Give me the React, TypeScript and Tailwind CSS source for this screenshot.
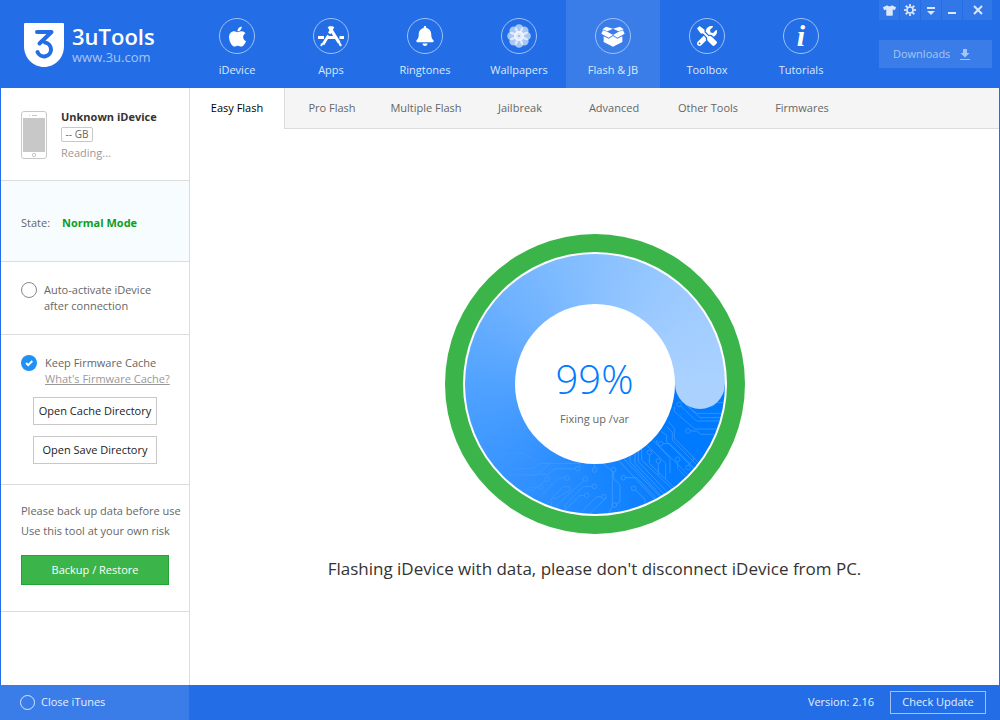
import type { ReactNode } from "react";
import { FaApple, FaBell, FaTools, FaTshirt } from "react-icons/fa";

type NavItem = {
  label: string;
  icon: ReactNode;
  active?: boolean;
};

function AppsIcon() {
  return (
    <svg width="28" height="24" viewBox="0 0 28 24" fill="none" stroke="white">
      <path d="M1 13.500H7M10.500 13.500h8M22.500 13.500H27" strokeWidth="2.800" />
      <path d="M16 2.500 12.300 9.500M11.500 11.500 6 20.500" strokeWidth="2.800" />
      <path d="M5.300 19.500 4 22" strokeWidth="1.800" />
      <path d="M12 2.500 22 18.500" strokeWidth="3.200" />
      <path d="m21.500 17.500 2.500 4.500" strokeWidth="2.200" />
    </svg>
  );
}

function FlowerIcon() {
  const petals = [0, 45, 90, 135, 180, 225, 270, 315];
  return (
    <svg width="24" height="24" viewBox="0 0 24 24" fill="white">
      {petals.map((angle) => (
        <circle
          key={angle}
          cx="12"
          cy="4.500"
          r="4.300"
          opacity="0.6"
          transform={`rotate(${angle} 12 12)`}
        />
      ))}
      <circle cx="12" cy="12" r="5" opacity="0.85" />
      <circle cx="12" cy="12" r="1" fill="#8db5f3" />
    </svg>
  );
}

function BoxIcon() {
  return (
    <svg width="24" height="21" viewBox="0 0 72 63" fill="white">
      <path d="M15 2 36 8 19 16 4 10Z" />
      <path d="M57 2 36 8 53 16 68 10Z" />
      <path d="M19 17 36 27 23 35 1 23 6 13Z" />
      <path d="M53 17 36 27 49 35 71 23 66 13Z" />
      <path d="M8 31 23 38 36 30 49 38 64 31V48L36 62 8 48Z" />
    </svg>
  );
}

function GearIcon() {
  const teeth = [0, 45, 90, 135, 180, 225, 270, 315];
  return (
    <svg width="12" height="12" viewBox="0 0 12 12" fill="none" stroke="currentColor">
      <circle cx="6" cy="6" r="3" strokeWidth="1.600" />
      {teeth.map((angle) => (
        <path key={angle} d="M6 0v2.600" strokeWidth="1.800" transform={`rotate(${angle} 6 6)`} />
      ))}
    </svg>
  );
}

function MenuIcon() {
  return (
    <svg width="10" height="10" viewBox="0 0 10 10" fill="currentColor">
      <path d="M1 2h8v2H1zM1 6h8L5 10z" />
    </svg>
  );
}

function MinimizeIcon() {
  return (
    <svg width="10" height="10" viewBox="0 0 10 10" fill="currentColor">
      <path d="M1 7h8v2H1z" />
    </svg>
  );
}

function CloseIcon() {
  return (
    <svg width="10" height="10" viewBox="0 0 10 10" stroke="currentColor" strokeWidth="2">
      <path d="m1 1 8 8M9 1 1 9" />
    </svg>
  );
}

function DownloadIcon() {
  return (
    <svg width="10" height="11" viewBox="0 0 10 11" fill="currentColor">
      <path d="M3 0h4v4h2.500L5 8.500.5 4H3zM0 10h10v1H0z" />
    </svg>
  );
}

function Logo() {
  return (
    <svg width="40" height="44" viewBox="0 0 40 44" fill="none">
      <path d="M1 0h38a1 1 0 0 1 1 1v22c0 12-9 21-20 21S0 35 0 23V1a1 1 0 0 1 1-1Z" fill="white" />
      <path
        d="M13 9h14.500L15.500 20.500M21 19.500a7 7 0 1 1-7.500 9.500"
        stroke="#236ee6"
        strokeWidth="4"
        strokeLinecap="round"
        strokeLinejoin="round"
      />
    </svg>
  );
}

function PhoneIcon() {
  return (
    <svg width="26" height="48" viewBox="0 0 26 48" fill="none" stroke="#c8c8c8">
      <rect x="0.5" y="0.5" width="25" height="47" rx="2.500" />
      <rect x="2" y="7" width="22" height="34" fill="#c8c8c8" stroke="none" />
      <path d="M8 4.500h1M11 4.500h5" />
      <circle cx="13" cy="44" r="1.700" />
    </svg>
  );
}

const dots = [
  [717, 523], [744, 603], [662, 641], [628, 667], [655, 693], [713, 688], [744, 713],
  [521, 719], [550, 743], [581, 775], [491, 800], [523, 825], [463, 769], [440, 796],
  [436, 747], [464, 720], [413, 716], [381, 744], [322, 748], [302, 772],
];

const traces = [
  "M723 529 770 573H850",
  "M735 522 780 563H850",
  "M745 530 770 550H860",
  "M703 530V545L765 597H840",
  "M751 603H770L782 613H840",
  "M815 530 830 518H860",
  "M669 641H690L790 740",
  "M685 575 703 595V625L800 722",
  "M680 590 697 607V630L795 730",
  "M664 605 680 615V635L785 740",
  "M650 630V640L770 760",
  "M628 674V700L720 790",
  "M655 700V735",
  "M713 695V715L745 750",
  "M744 706 760 690V680",
  "M640 632 690 685V730",
  "M620 645 677 700V745",
  "M595 660V695L690 795",
  "M585 668V700L680 800",
  "M570 675V695L670 805",
  "M550 685 660 800V830",
  "M535 690 650 815",
  "M605 655V690L700 780",
  "M557 743H590L645 800V830",
  "M586 780 615 808V840",
  "M521 726V745L540 765V815L529 822",
  "M490 700 517 725V830L505 850",
  "M497 805 450 850",
  "M485 800H470L420 850",
  "M457 769H430L375 825V850",
  "M433 796H420L370 845",
  "M431 752 345 830",
  "M375 744H355L300 800",
  "M316 753 280 780H235",
  "M296 772H270L240 800",
  "M407 716H345L325 733H240L215 760",
  "M420 710V700H300L280 715H200",
  "M390 770V780L350 805H335V840",
  "M390 770H370L320 820",
  "M285 690 250 670H180",
  "M330 700 290 735H190",
  "M464 713V700",
];

// Decorative circuit board pattern in the lower part of the ring
function Circuit() {
  return (
    <svg
      className="absolute inset-0 h-full w-full"
      viewBox="75 72 780 780"
      fill="none"
      stroke="white"
      strokeWidth="3"
    >
      <defs>
        <linearGradient id="fade" x1="180" y1="0" x2="560" y2="0" gradientUnits="userSpaceOnUse">
          <stop offset="0" stopColor="white" stopOpacity="0.1" />
          <stop offset="1" stopColor="white" />
        </linearGradient>
        <mask id="circuit-fade" maskUnits="userSpaceOnUse" x="75" y="72" width="780" height="780">
          <rect x="75" y="72" width="780" height="780" fill="url(#fade)" stroke="none" />
        </mask>
      </defs>
      <g mask="url(#circuit-fade)" opacity="0.18">
        {traces.map((d) => (
          <path key={d} d={d} />
        ))}
        {dots.map(([x, y]) => (
          <circle key={`${x}-${y}`} cx={x} cy={y} r="7" />
        ))}
      </g>
      <path d="M705 462h150a75 75 0 0 1-150 0Z" fill="#abd2ff" stroke="none" />
    </svg>
  );
}

const navItems: NavItem[] = [
  { label: "iDevice", icon: <FaApple size={23} /> },
  { label: "Apps", icon: <AppsIcon /> },
  { label: "Ringtones", icon: <FaBell size={20} /> },
  { label: "Wallpapers", icon: <FlowerIcon /> },
  { label: "Flash & JB", icon: <BoxIcon />, active: true },
  { label: "Toolbox", icon: <FaTools size={20} /> },
  {
    label: "Tutorials",
    icon: (
      <span className="font-['Liberation_Serif',serif] text-[30px] leading-none font-bold italic">i</span>
    ),
  },
];

const tabs = [
  "Easy Flash",
  "Pro Flash",
  "Multiple Flash",
  "Jailbreak",
  "Advanced",
  "Other Tools",
  "Firmwares",
];

function Header() {
  return (
    <header className="flex h-[88px] shrink-0 bg-[#236ee6] text-white">
      <div className="flex w-[190px] shrink-0 items-start gap-2 pt-[23px] pl-6">
        <Logo />
        <div>
          <div className="text-[22px] leading-[26px] font-semibold">3uTools</div>
          <div className="text-[13px] leading-4 text-[#a7c5f5]">www.3u.com</div>
        </div>
      </div>

      <nav className="flex">
        {navItems.map((item) => (
          <a
            key={item.label}
            href="#"
            className={
              item.active
                ? "flex w-[94px] flex-col items-center bg-[#3a7de9] pt-[18px]"
                : "flex w-[94px] flex-col items-center pt-[18px]"
            }
          >
            <span className="flex h-9 w-9 items-center justify-center rounded-full border border-[#a0c1f5]">
              {item.icon}
            </span>
            <span className="mt-2 leading-4 text-[#dbe8fc]">{item.label}</span>
          </a>
        ))}
      </nav>

      <div className="mr-2 ml-auto w-[113px]">
        <div className="flex gap-px text-[#dbe8fc]">
          <button aria-label="Skin" className="flex h-5 w-5 items-center justify-center bg-[#3177e8]">
            <FaTshirt size={13} />
          </button>
          <button aria-label="Settings" className="flex h-5 w-5 items-center justify-center bg-[#3177e8]">
            <GearIcon />
          </button>
          <button aria-label="Menu" className="flex h-5 w-5 items-center justify-center bg-[#3177e8]">
            <MenuIcon />
          </button>
          <button aria-label="Minimize" className="flex h-5 w-5 items-center justify-center bg-[#3177e8]">
            <MinimizeIcon />
          </button>
          <button aria-label="Close" className="flex h-5 flex-1 items-center justify-center bg-[#3177e8]">
            <CloseIcon />
          </button>
        </div>
        <button className="mt-5 flex h-7 w-full items-center gap-[10px] bg-[#3a7de9] pl-[14px] text-[#a7c5f5]">
          Downloads
          <DownloadIcon />
        </button>
      </div>
    </header>
  );
}

function Sidebar() {
  return (
    <aside className="w-[189px] shrink-0 border-r border-[#dcdcdc] whitespace-nowrap text-[#666]">
      <section className="flex gap-[14px] border-b border-[#dcdcdc] pt-[21px] pb-[19px] pl-5">
        <div className="pt-[2px]">
          <PhoneIcon />
        </div>
        <div>
          <h2 className="leading-4 font-bold text-[#333]">Unknown iDevice</h2>
          <div className="mt-[2px] mb-[3px] flex h-[15px] w-8 items-center justify-center rounded-xs border border-[#c8c8c8] text-[10px]">
            -- GB
          </div>
          <p className="leading-4 text-[#999]">Reading...</p>
        </div>
      </section>

      <section className="flex h-[81px] items-center gap-3 border-b border-[#dcdcdc] bg-[#f7fcff] pt-1 pl-5">
        <span>State:</span>
        <span className="font-bold text-[#0e9c27]">Normal Mode</span>
      </section>

      <section className="border-b border-[#dcdcdc] py-5 pl-5">
        <label className="flex items-start gap-[7px] leading-4">
          <input
            type="checkbox"
            className="h-4 w-4 shrink-0 appearance-none rounded-full border border-[#888]"
          />
          <span>
            Auto-activate iDevice
            <br />
            after connection
          </span>
        </label>
      </section>

      <section className="border-b border-[#dcdcdc] py-5 pl-5">
        <label className="relative flex items-start gap-2 leading-4">
          <input
            type="checkbox"
            defaultChecked
            className="h-4 w-4 shrink-0 appearance-none rounded-full bg-[#2090f5]"
          />
          <svg className="absolute top-0 left-0" width="16" height="16" viewBox="0 0 16 16" fill="none">
            <path d="m5 8 2.200 2.200L11.300 6" stroke="white" strokeWidth="2" />
          </svg>
          Keep Firmware Cache
        </label>
        <a href="#" className="ml-6 block leading-4 text-[#999] underline">
          What's Firmware Cache?
        </a>
        <div className="mt-[10px] ml-3 flex w-[124px] flex-col gap-[11px] text-[#222]">
          <button className="h-7 border border-[#c8c8c8] bg-white">Open Cache Directory</button>
          <button className="h-7 border border-[#c8c8c8] bg-white">Open Save Directory</button>
        </div>
      </section>

      <section className="border-b border-[#dcdcdc] pt-4 pb-[26px] pl-5">
        <p className="leading-5">Please back up data before use</p>
        <p className="leading-5">Use this tool at your own risk</p>
        <button className="mt-[14px] h-[30px] w-[148px] border border-[#22a336] bg-[#3bb54a] text-white">
          Backup / Restore
        </button>
      </section>
    </aside>
  );
}

function ProgressRing() {
  return (
    <div className="flex h-[300px] w-[300px] items-center justify-center rounded-full bg-[#3bb54a]">
      <div className="rounded-full bg-white p-[2px]">
        <div className="relative flex h-[260px] w-[260px] items-center justify-center overflow-hidden rounded-full bg-[conic-gradient(from_90deg,#007aff_0%,#007aff_12%,#1a87ff_25%,#3693ff_37%,#50a2ff_50%,#6fb2ff_62%,#88c0ff_75%,#9ccaff_87%,#abd2ff_100%)]">
          <Circuit />
          <div className="relative flex h-40 w-40 flex-col items-center rounded-full bg-white pt-[51px]">
            <div className="text-[40px] leading-[48px] font-light text-[#007aff]">99%</div>
            <div className="mt-2 leading-4 text-[#666]">Fixing up /var</div>
          </div>
        </div>
      </div>
    </div>
  );
}

export default function App() {
  return (
    <div className="flex min-h-screen flex-col bg-white font-['Open_Sans','Noto_Sans',sans-serif] text-[11px]">
      <Header />

      <div className="flex flex-1 border-x border-[#236ee6]">
        <Sidebar />

        <main className="flex min-w-0 flex-1 flex-col">
          <nav className="flex h-[41px] shrink-0 bg-[#f5f5f5] text-[#666]">
            {tabs.map((tab, index) => (
              <a
                key={tab}
                href="#"
                className={
                  index === 0
                    ? "flex w-[95px] items-center justify-center border-r border-[#dcdcdc] bg-white text-black"
                    : "flex w-[94px] items-center justify-center border-b border-[#dcdcdc] pt-px"
                }
              >
                {tab}
              </a>
            ))}
            <div className="flex-1 border-b border-[#dcdcdc]" />
          </nav>

          <div className="flex flex-1 flex-col items-center justify-center">
            <ProgressRing />
            <p className="mt-[23px] text-[17px] leading-6 text-[#333]">
              Flashing iDevice with data, please don't disconnect iDevice from PC.
            </p>
          </div>
        </main>
      </div>

      <footer className="flex h-[35px] shrink-0 items-center bg-[#236ee6] text-[#e6effd]">
        <label className="flex h-full w-[189px] items-center gap-[6px] bg-[#3a7de9] pl-5">
          <input
            type="checkbox"
            className="h-[15px] w-[15px] appearance-none rounded-full border border-[#dbe8fc]"
          />
          Close iTunes
        </label>
        <span className="ml-auto">Version: 2.16</span>
        <button className="mr-[14px] ml-4 h-[23px] w-24 border border-[#a0c1f5]">Check Update</button>
      </footer>
    </div>
  );
}
